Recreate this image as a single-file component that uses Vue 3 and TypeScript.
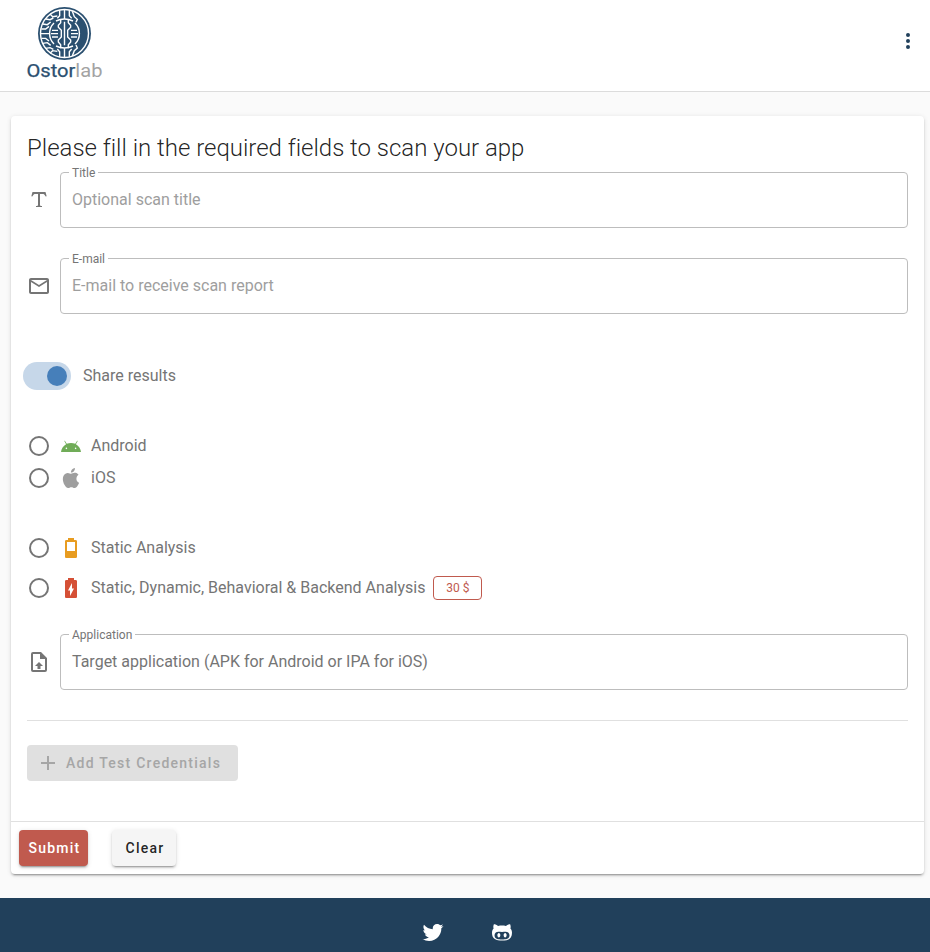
<script setup lang="ts">
import { ref } from 'vue'

const icons: Record<string, string> = {
  title: 'M18.5,4L19.66,8.35L18.7,8.61C18.25,7.74 17.79,6.87 17.26,6.43C16.73,6 16.11,6 15.5,6H13V16.5C13,17 13,17.5 13.33,17.75C13.67,18 14.33,18 15,18V19H9V18C9.67,18 10.33,18 10.67,17.75C11,17.5 11,17 11,16.5V6H8.5C7.89,6 7.27,6 6.74,6.43C6.21,6.87 5.75,7.74 5.3,8.61L4.34,8.35L5.5,4H18.5Z',
  email: 'M22 6C22 4.9 21.1 4 20 4H4C2.9 4 2 4.9 2 6V18C2 19.1 2.9 20 4 20H20C21.1 20 22 19.1 22 18V6M20 6L12 11L4 6H20M20 18H4V8L12 13L20 8V18Z',
  file: 'M14,2L20,8V20A2,2 0 0,1 18,22H6A2,2 0 0,1 4,20V4A2,2 0 0,1 6,2H14M18,20V9H13V4H6V20H18M12,12L16,16H13.5V19H10.5V16H8L12,12Z',
  android: 'M16.61 15.15C16.15 15.15 15.77 14.78 15.77 14.32S16.15 13.5 16.61 13.5H16.61C17.07 13.5 17.45 13.86 17.45 14.32C17.45 14.78 17.07 15.15 16.61 15.15M7.41 15.15C6.95 15.15 6.57 14.78 6.57 14.32C6.57 13.86 6.95 13.5 7.41 13.5H7.41C7.87 13.5 8.24 13.86 8.24 14.32C8.24 14.78 7.87 15.15 7.41 15.15M16.91 10.14L18.58 7.26C18.67 7.09 18.61 6.88 18.45 6.79C18.28 6.69 18.07 6.75 18 6.92L16.29 9.83C14.95 9.22 13.5 8.9 12 8.91C10.47 8.91 9 9.24 7.73 9.82L6.04 6.91C5.95 6.74 5.74 6.68 5.57 6.78C5.4 6.87 5.35 7.08 5.44 7.25L7.1 10.13C4.25 11.69 2.29 14.58 2 18H22C21.72 14.59 19.77 11.7 16.91 10.14H16.91Z',
  apple: 'M18.71,19.5C17.88,20.74 17,21.95 15.66,21.97C14.32,22 13.89,21.18 12.37,21.18C10.84,21.18 10.37,21.95 9.1,22C7.79,22.05 6.8,20.68 5.96,19.47C4.25,17 2.94,12.45 4.7,9.39C5.57,7.87 7.13,6.91 8.82,6.88C10.1,6.86 11.32,7.75 12.11,7.75C12.89,7.75 14.37,6.68 15.92,6.84C16.57,6.87 18.39,7.1 19.56,8.82C19.47,8.88 17.39,10.1 17.41,12.63C17.44,15.65 20.06,16.66 20.09,16.67C20.06,16.74 19.67,18.11 18.71,19.5M13,3.5C13.73,2.67 14.94,2.04 15.94,2C16.07,3.17 15.6,4.35 14.9,5.19C14.21,6.04 13.07,6.7 11.95,6.61C11.8,5.46 12.36,4.26 13,3.5Z',
  battery: 'M16,15H8V6H16M16.67,4H15V2H9V4H7.33A1.33,1.33 0 0,0 6,5.33V20.67C6,21.4 6.6,22 7.33,22H16.67A1.33,1.33 0 0,0 18,20.67V5.33C18,4.6 17.4,4 16.67,4Z',
  charging: 'M16.67,4H15V2H9V4H7.33A1.33,1.33 0 0,0 6,5.33V20.66C6,21.4 6.6,22 7.33,22H16.66C17.4,22 18,21.4 18,20.67V5.33C18,4.6 17.4,4 16.67,4M11,20V14.5H9L13,7V12.5H15',
  plus: 'M19,13H13V19H11V13H5V11H11V5H13V11H19V13Z',
  dots: 'M12,16A2,2 0 0,1 14,18A2,2 0 0,1 12,20A2,2 0 0,1 10,18A2,2 0 0,1 12,16M12,10A2,2 0 0,1 14,12A2,2 0 0,1 12,14A2,2 0 0,1 10,12A2,2 0 0,1 12,10M12,4A2,2 0 0,1 14,6A2,2 0 0,1 12,8A2,2 0 0,1 10,6A2,2 0 0,1 12,4Z',
  twitter: 'M22.46,6C21.69,6.35 20.86,6.58 20,6.69C20.88,6.16 21.56,5.32 21.88,4.31C21.05,4.81 20.13,5.16 19.16,5.36C18.37,4.5 17.26,4 16,4C13.65,4 11.73,5.92 11.73,8.29C11.73,8.63 11.77,8.96 11.84,9.27C8.28,9.09 5.11,7.38 3,4.79C2.63,5.42 2.42,6.16 2.42,6.94C2.42,8.43 3.17,9.75 4.33,10.5C3.62,10.5 2.96,10.3 2.38,10C2.38,10 2.38,10 2.38,10.03C2.38,12.11 3.86,13.85 5.82,14.24C5.46,14.34 5.08,14.39 4.69,14.39C4.42,14.39 4.15,14.36 3.89,14.31C4.43,16 6,17.26 7.89,17.29C6.43,18.45 4.58,19.13 2.56,19.13C2.22,19.13 1.88,19.11 1.54,19.07C3.44,20.29 5.7,21 8.12,21C16,21 20.33,14.46 20.33,8.79C20.33,8.6 20.33,8.42 20.32,8.23C21.16,7.63 21.88,6.87 22.46,6Z',
  github: 'M20.38,8.53C20.54,8.13 21.06,6.54 20.21,4.39C20.21,4.39 18.9,4 15.91,6C14.66,5.67 13.33,5.62 12,5.62C10.68,5.62 9.34,5.67 8.09,6C5.1,3.97 3.79,4.39 3.79,4.39C2.94,6.54 3.46,8.13 3.63,8.53C2.61,9.62 2,11 2,12.72C2,19.16 6.16,20.61 12,20.61C17.79,20.61 22,19.16 22,12.72C22,11 21.39,9.62 20.38,8.53M12,19.38C7.88,19.38 4.53,19.19 4.53,15.19C4.53,14.24 5,13.34 5.8,12.61C7.14,11.38 9.43,12.03 12,12.03C14.59,12.03 16.85,11.38 18.2,12.61C19,13.34 19.5,14.23 19.5,15.19C19.5,19.18 16.13,19.38 12,19.38M8.86,13.12C8.04,13.12 7.36,14.12 7.36,15.34C7.36,16.57 8.04,17.58 8.86,17.58C9.69,17.58 10.36,16.58 10.36,15.34C10.36,14.11 9.69,13.12 8.86,13.12M15.14,13.12C14.31,13.12 13.64,14.11 13.64,15.34C13.64,16.58 14.31,17.58 15.14,17.58C15.96,17.58 16.64,16.58 16.64,15.34C16.64,14.11 16,13.12 15.14,13.12Z',
}

interface Choice { value: string; label: string; icon: string; price?: string }

const platforms: Choice[] = [
  { value: 'android', label: 'Android', icon: 'android' },
  { value: 'ios', label: 'iOS', icon: 'apple' },
]
const plans: Choice[] = [
  { value: 'static', label: 'Static Analysis', icon: 'battery' },
  { value: 'full', label: 'Static, Dynamic, Behavioral & Backend Analysis', icon: 'charging', price: '30 $' },
]

const title = ref('')
const email = ref('')
const share = ref(true)
const platform = ref('')
const plan = ref('')

function clear(): void {
  title.value = ''
  email.value = ''
  platform.value = ''
  plan.value = ''
}
</script>

<template>
  <div class="page">
    <header class="bar">
      <svg class="logo" viewBox="0 0 90 90">
        <g transform="translate(16 5) scale(.33333)">
          <circle cx="85.500" cy="85.500" r="79.500" class="navy" />
          <circle cx="85.500" cy="85.500" r="72" class="trace" />
          <path class="trace" d="M54 54A44 44 0 0 0 54 117M117 54A44 44 0 0 1 117 117M60 48Q85 36 111 48M60 123Q85 135 111 123" />
          <g class="trace">
            <path d="M74 42V53L67 61V67L76 76V96L67 105V111L74 119V130" />
            <path d="M97 42V53L104 61V67L95 76V96L104 105V111L97 119V130" />
            <path d="M85.500 14V42M85.500 50V121M85.500 130V157M71 15V32L64 40M100 15V32L107 40M71 156V140L64 132M100 156V140L107 132" />
            <path d="M48 76H66M45 86H66M48 96H66M105 76H123M105 86H126M105 96H123" />
            <path d="M14 86H41M16 72H29L39 64M16 100H29L39 108" />
            <path d="M20 57L34 59L44 51M29 42L42 44L52 39M42 27L50 35L64 33" />
            <path d="M20 115L34 113L44 121M29 130L42 128L52 133M42 145L50 137L64 139" />
            <path d="M109 19L115 35L124 43L120 52M109 153L115 137L124 129L120 120" />
          </g>
        </g>
        <text x="6.500" y="77" textLength="76" lengthAdjust="spacingAndGlyphs"><tspan class="ostor">Ostor</tspan><tspan class="lab">lab</tspan></text>
      </svg>
      <button class="plain" type="button" aria-label="Menu"><svg class="icon" viewBox="0 0 24 24"><path :d="icons.dots" /></svg></button>
    </header>

    <main>
      <form class="card" @submit.prevent>
        <div class="content">
          <h1>Please fill in the required fields to scan your app</h1>
          <div class="row">
            <svg class="icon" viewBox="0 0 24 24"><path :d="icons.title" /></svg>
            <fieldset class="field"><legend>Title</legend><input v-model="title" placeholder="Optional scan title" /></fieldset>
          </div>
          <div class="row">
            <svg class="icon" viewBox="0 0 24 24"><path :d="icons.email" /></svg>
            <fieldset class="field"><legend>E-mail</legend><input v-model="email" placeholder="E-mail to receive scan report" /></fieldset>
          </div>

          <label class="share">
            <input v-model="share" class="native" type="checkbox" />
            <span class="switch" :class="{ on: share }"><span class="thumb" /></span>
            <span>Share results</span>
          </label>

          <div class="choices platforms">
            <label v-for="p in platforms" :key="p.value" class="choice">
              <input v-model="platform" class="native" type="radio" :value="p.value" />
              <span class="radio" :class="{ on: platform === p.value }" />
              <svg class="icon" :class="p.icon" viewBox="0 0 24 24"><path :d="icons[p.icon]" /></svg>
              <span>{{ p.label }}</span>
            </label>
          </div>

          <div class="choices plans">
            <label v-for="p in plans" :key="p.value" class="choice">
              <input v-model="plan" class="native" type="radio" :value="p.value" />
              <span class="radio" :class="{ on: plan === p.value }" />
              <svg class="icon" :class="p.icon" viewBox="0 0 24 24"><path :d="icons[p.icon]" /></svg>
              <span>{{ p.label }}</span>
              <span v-if="p.price" class="chip">{{ p.price }}</span>
            </label>
          </div>

          <div class="row">
            <svg class="icon" viewBox="0 0 24 24"><path :d="icons.file" /></svg>
            <fieldset class="field"><legend>Application</legend><span class="target">Target application (APK for Android or IPA for iOS)</span></fieldset>
          </div>
          <hr />
          <button class="btn add" type="button" disabled><svg class="icon" viewBox="0 0 24 24"><path :d="icons.plus" /></svg><span>Add Test Credentials</span></button>
        </div>
        <div class="actions">
          <button class="btn submit" type="submit">Submit</button>
          <button class="btn clear" type="button" @click="clear">Clear</button>
        </div>
      </form>
    </main>

    <footer>
      <svg class="icon" viewBox="0 0 24 24"><path :d="icons.twitter" /></svg>
      <svg class="icon" viewBox="0 0 24 24"><path :d="icons.github" /></svg>
    </footer>
  </div>
</template>

<style>
body { background: #fafafa; overflow: hidden; }
</style>

<style scoped>
.page { height: 952px; display: flex; flex-direction: column; overflow: hidden; box-sizing: border-box; font-family: Roboto, sans-serif; font-size: 16px; line-height: 24px; color: #757575; }
.page * { box-sizing: border-box; }
.icon { width: 24px; height: 24px; flex: none; display: block; fill: currentColor; }
.bar { height: 92px; flex: none; display: flex; justify-content: space-between; align-items: flex-start; padding: 0 10px 0 20px; background: #fff; border-bottom: 1px solid #dcdcdc; }
.logo { width: 90px; height: 90px; }
.navy { fill: #2b5070; }
.trace { fill: none; stroke: #fff; stroke-width: 4.2; }
.logo text { font-family: Roboto, sans-serif; font-size: 18px; }
.ostor { fill: #2b5070; stroke: #2b5070; stroke-width: .25; font-weight: 400; }
.lab { fill: #a3a3a3; }
.plain { margin-top: 29px; padding: 0; border: 0; background: none; color: #21405b; }
main { flex: none; padding: 24px 6px 24px 11px; }
.card { height: 758px; display: flex; flex-direction: column; background: #fff; border-radius: 4px; box-shadow: 0 3px 1px -2px rgba(0,0,0,.2), 0 2px 2px 0 rgba(0,0,0,.14), 0 1px 5px 0 rgba(0,0,0,.12); }
.content { flex: 1; padding: 16px 16px 0; }
h1 { margin: 0; height: 32px; font-size: 24px; line-height: 32px; font-weight: 300; letter-spacing: -.015px; color: rgba(0,0,0,.87); }
.row { display: flex; align-items: center; gap: 9px; height: 56px; margin-bottom: 30px; }
h1 + .row { margin-top: 8px; }
.field { flex: 1; min-width: 0; height: 64px; margin: -8px 0 0; padding: 0 11px; border: 1px solid #bdbdbd; border-radius: 4px; }
.field legend { height: 16px; margin-left: -3px; padding: 0 3px; font-size: 12px; line-height: 18px; }
.field input { display: block; width: 100%; height: 38px; padding: 0; border: 0; outline: 0; background: none; font: inherit; color: inherit; }
.field input::placeholder { color: #9e9e9e; opacity: 1; }
.target { display: block; height: 40px; line-height: 40px; }
.native { appearance: none; width: 0; height: 0; margin: 0; flex: none; }
.share { display: flex; align-items: center; width: max-content; height: 28px; margin: 48px 0 0 -4px; }
.switch { width: 48px; height: 28px; margin-right: 12px; padding: 4px; border-radius: 14px; background: #ccc; display: flex; }
.switch.on { background: #c6d7e9; justify-content: flex-end; }
.thumb { width: 20px; height: 20px; border-radius: 50%; background: #467fba; }
.choices { display: flex; flex-direction: column; }
.platforms { gap: 8px; margin-top: 44px; }
.plans { gap: 16px; margin: 46px 0 34px; }
.choice { display: flex; align-items: center; width: max-content; height: 24px; }
.radio { width: 20px; height: 20px; margin: 0 10px 0 2px; border: 2px solid #757575; border-radius: 50%; }
.radio.on { border-width: 6px; border-color: #467fba; }
.choice .icon { margin-right: 8px; }
.android { color: #70ac58; }
.apple { color: #9e9e9e; }
.battery { color: #e89c20; }
.charging { color: #d55036; }
.chip { width: 49px; height: 24px; margin-left: 8px; text-align: center; white-space: nowrap; border: 1px solid #c05a4e; border-radius: 4px; font-size: 12px; line-height: 22px; color: #c05a4e; }
hr { height: 1px; margin: 0 0 24px; border: 0; background: #e0e0e0; }
.btn { display: flex; align-items: center; justify-content: center; height: 36px; padding: 0; border: 0; border-radius: 4px; font: 500 14px/36px Roboto, sans-serif; letter-spacing: 1.25px; }
.add { width: 211px; padding-left: 9px; justify-content: flex-start; background: #e0e0e0; color: #a6a6a6; }
.add .icon { margin-right: 6px; }
.actions { height: 53px; flex: none; display: flex; align-items: center; gap: 24px; padding: 0 8px; border-top: 1px solid #e0e0e0; }
.submit, .clear { padding-left: 2px; box-shadow: 0 3px 1px -2px rgba(0,0,0,.2), 0 2px 2px 0 rgba(0,0,0,.14), 0 1px 5px 0 rgba(0,0,0,.12); }
.submit { width: 69px; background: #c05a4e; color: #fff; }
.clear { width: 64px; background: #f5f5f5; color: rgba(0,0,0,.87); }
footer { flex: 1; display: flex; justify-content: center; gap: 44.5px; padding: 22px 0 0 4.5px; background: #21405b; color: #fff; }
</style>
